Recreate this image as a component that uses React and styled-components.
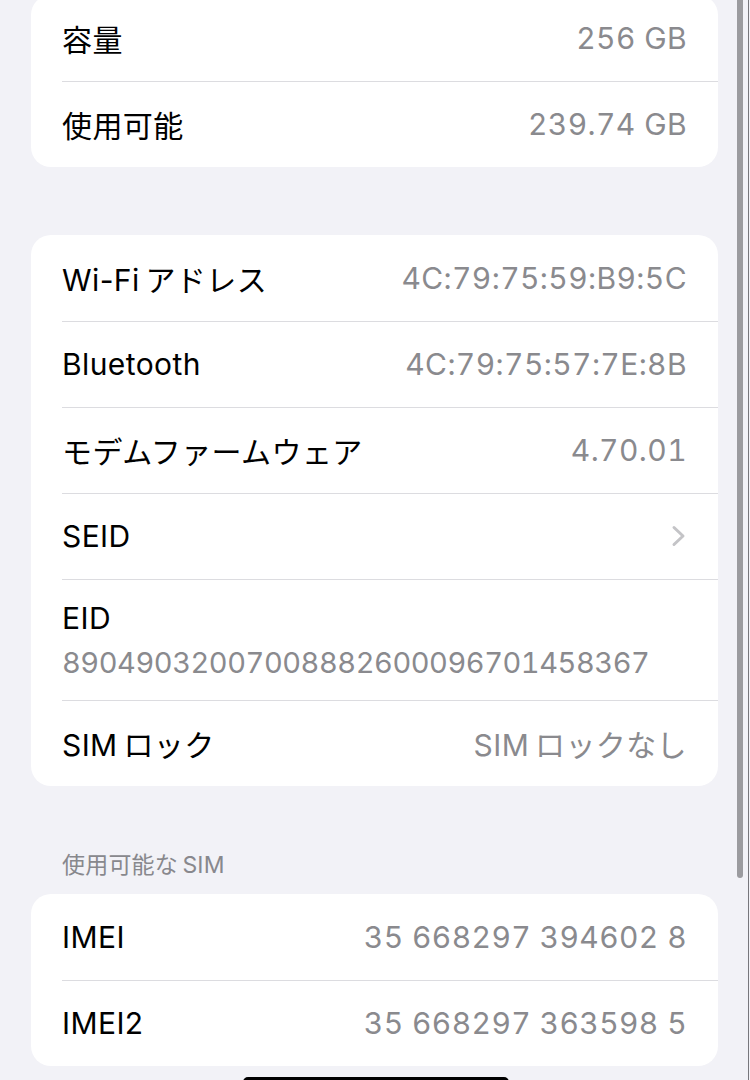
import React from 'react';
import styled, { createGlobalStyle } from 'styled-components';

const GlobalStyle = createGlobalStyle`
  html, body {
    margin: 0;
    padding: 0;
    background: #f2f2f7;
    height: 1080px;
    overflow: hidden;
  }

  body {
    font-family: Inter, "Noto Sans CJK JP", sans-serif;
    -webkit-font-smoothing: antialiased;
  }
`;

const Screen = styled.div`
  position: relative;
  width: 750px;
  height: 1080px;
  overflow: hidden;
  background: #f2f2f7;
`;

const Content = styled.div`
  display: flex;
  flex-direction: column;
  padding: 0 32px 0 31px;
  margin-top: -5px;
`;

const Card = styled.div`
  background: #ffffff;
  border-radius: 20px;
  overflow: hidden;
  margin-top: ${(p) => p.$gap || 0}px;
`;

const Row = styled.div`
  position: relative;
  display: flex;
  flex-direction: ${(p) => (p.$stacked ? 'column' : 'row')};
  justify-content: ${(p) => (p.$stacked ? 'center' : 'space-between')};
  align-items: ${(p) => (p.$stacked ? 'flex-start' : 'center')};
  gap: ${(p) => (p.$stacked ? '9px' : '0')};
  height: ${(p) => (p.$stacked ? 121 : 86)}px;
  box-sizing: border-box;
  padding: 0 31px;

  &:not(:first-child)::before {
    content: '';
    position: absolute;
    top: 0;
    left: 31px;
    right: 0;
    height: 1px;
    background: #dcdce0;
  }
`;

const Label = styled.span`
  font-size: 30px;
  color: #000;
  letter-spacing: 0.4px;
`;

const Value = styled.span`
  font-size: ${(p) => (p.$mono ? 29 : 30)}px;
  color: #8a8a8e;
  font-variant-numeric: tabular-nums;
  letter-spacing: ${(p) => (p.$mono ? '-0.45px' : '0.4px')};
  display: flex;
  align-items: center;
`;

const SectionHeader = styled.div`
  font-size: 23px;
  color: #88888d;
  padding: 0 31px;
  margin-top: 64px;
  height: 30px;
  line-height: 30px;
  letter-spacing: 0.2px;
`;

const ScrollIndicator = styled.div`
  position: absolute;
  top: 0;
  left: 737px;
  width: 6px;
  height: 878px;
  border-radius: 0 0 3px 3px;
  background: #9b9b9f;
`;

const EdgeLine = styled.div`
  position: absolute;
  top: 0;
  right: 1px;
  width: 1px;
  height: 100%;
  background: #77777c;
`;

const HomeIndicator = styled.div`
  position: absolute;
  left: 243px;
  top: 1077px;
  width: 266px;
  height: 10px;
  border-radius: 5px;
  background: #000;
`;

const Chevron = () => (
  <svg width="16" height="22" viewBox="0 0 16 22">
    <path
      d="M3 2.5 L12 11 L3 19.5"
      fill="none"
      stroke="#c4c4c7"
      strokeWidth="3"
      strokeLinecap="round"
      strokeLinejoin="round"
    />
  </svg>
);

// thin gap iOS puts between latin and kana
const gap = '\u2009';

const storage = [
  ['容量', '256 GB'],
  ['使用可能', '239.74 GB'],
];

const sims = [
  ['IMEI', '35 668297 394602 8'],
  ['IMEI2', '35 668297 363598 5'],
];

export default function App() {
  return (
    <Screen>
      <GlobalStyle />
      <Content>
        <Card>
          {storage.map(([k, v]) => (
            <Row key={k}>
              <Label>{k}</Label>
              <Value>{v}</Value>
            </Row>
          ))}
        </Card>

        <Card $gap={68}>
          <Row>
            <Label>Wi-Fi{gap}アドレス</Label>
            <Value>4C:79:75:59:B9:5C</Value>
          </Row>
          <Row>
            <Label>Bluetooth</Label>
            <Value>4C:79:75:57:7E:8B</Value>
          </Row>
          <Row>
            <Label>モデムファームウェア</Label>
            <Value>4.70.01</Value>
          </Row>
          <Row>
            <Label>SEID</Label>
            <Value>
              <Chevron />
            </Value>
          </Row>
          <Row $stacked>
            <Label>EID</Label>
            <Value $mono>89049032007008882600096701458367</Value>
          </Row>
          <Row>
            <Label>SIM{gap}ロック</Label>
            <Value>SIM{gap}ロックなし</Value>
          </Row>
        </Card>

        <SectionHeader>使用可能な{gap}SIM</SectionHeader>
        <Card $gap={14}>
          {sims.map(([k, v]) => (
            <Row key={k}>
              <Label>{k}</Label>
              <Value>{v}</Value>
            </Row>
          ))}
        </Card>
      </Content>
      <ScrollIndicator />
      <EdgeLine />
      <HomeIndicator />
    </Screen>
  );
}
